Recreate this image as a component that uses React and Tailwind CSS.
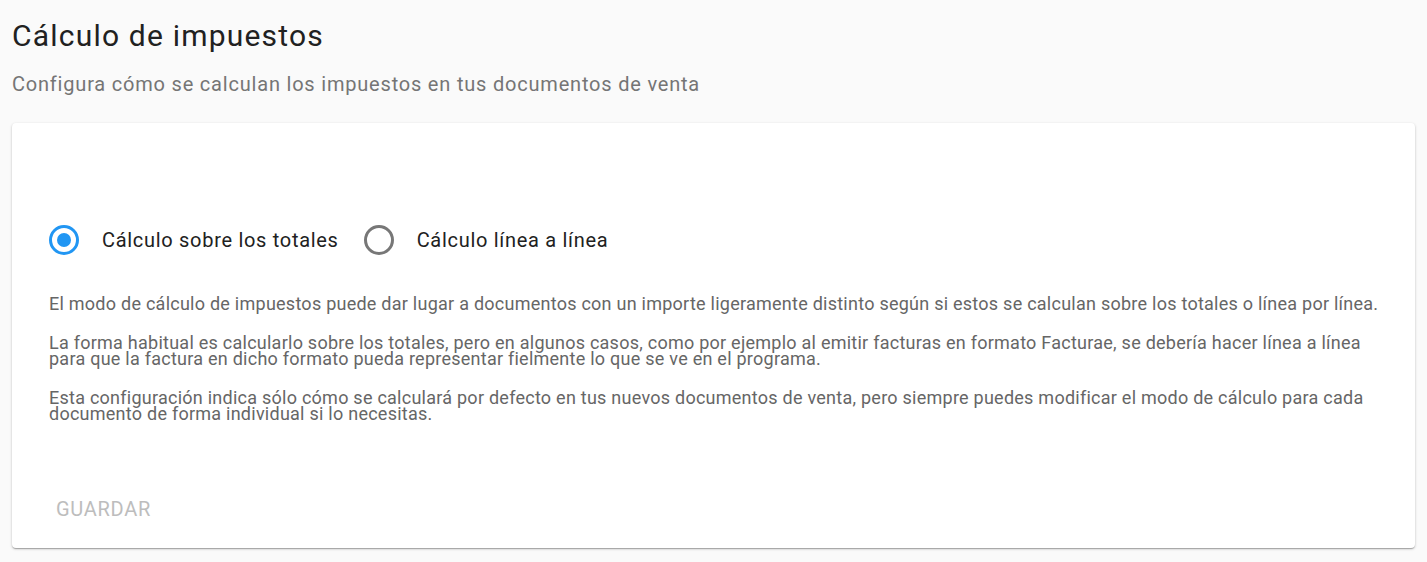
export default function App() {
  return (
    <div
      className="min-h-[562px] bg-[#fafafa] px-3 pt-[18px] pb-3"
      style={{ fontFamily: "Roboto, 'Liberation Sans', sans-serif" }}
    >
      {/* Header */}
      <h1 className="text-[30px] leading-[36px] tracking-[1.2px] text-[#212121] font-normal">Cálculo de impuestos</h1>
      <p className="mt-[18px] text-[20px] leading-[24px] tracking-[0.8px] text-[#757575]">
        Configura cómo se calculan los impuestos en tus documentos de venta
      </p>

      {/* Card */}
      <div className="mt-[27px] bg-white rounded-[4px] shadow-[0_1px_3px_rgba(0,0,0,0.2),0_1px_1px_rgba(0,0,0,0.14),0_2px_1px_-1px_rgba(0,0,0,0.12)] pl-[37px] pr-[30px] pt-[102px] pb-[21px]">
        {/* Radios */}
        <div className="flex items-center h-[30px]">
          <label className="flex items-center">
            <span className="w-[30px] h-[30px] rounded-full border-[3px] border-[#2196f3] flex items-center justify-center">
              <span className="w-[14px] h-[14px] rounded-full bg-[#2196f3]" />
            </span>
            <span className="ml-[23px] text-[20px] tracking-[0.7px] text-[#212121]">Cálculo sobre los totales</span>
          </label>
          <label className="flex items-center ml-[25px]">
            <span className="w-[30px] h-[30px] rounded-full border-[3px] border-[#777777]" />
            <span className="ml-[23px] text-[20px] tracking-[0.7px] text-[#212121]">Cálculo línea a línea</span>
          </label>
        </div>

        {/* Explanation */}
        <div className="mt-[41px] text-[18px] leading-[16px] tracking-[0.25px] text-[#666666]">
          <p>
            El modo de cálculo de impuestos puede dar lugar a documentos con un importe ligeramente distinto según si estos se calculan sobre los totales o línea por línea.
          </p>
          <p className="mt-[23px]">
            La forma habitual es calcularlo sobre los totales, pero en algunos casos, como por ejemplo al emitir facturas en formato Facturae, se debería hacer línea a línea para que la factura en dicho formato pueda representar fielmente lo que se ve en el programa.
          </p>
          <p className="mt-[23px]">
            Esta configuración indica sólo cómo se calculará por defecto en tus nuevos documentos de venta, pero siempre puedes modificar el modo de cálculo para cada documento de forma individual si lo necesitas.
          </p>
        </div>

        {/* Save */}
        <button
          disabled
          className="mt-[69px] px-[7px] py-[6px] text-[20px] leading-[24px] uppercase text-[#bdbdbd] tracking-[0.7px]"
        >
          Guardar
        </button>
      </div>
    </div>
  );
}
